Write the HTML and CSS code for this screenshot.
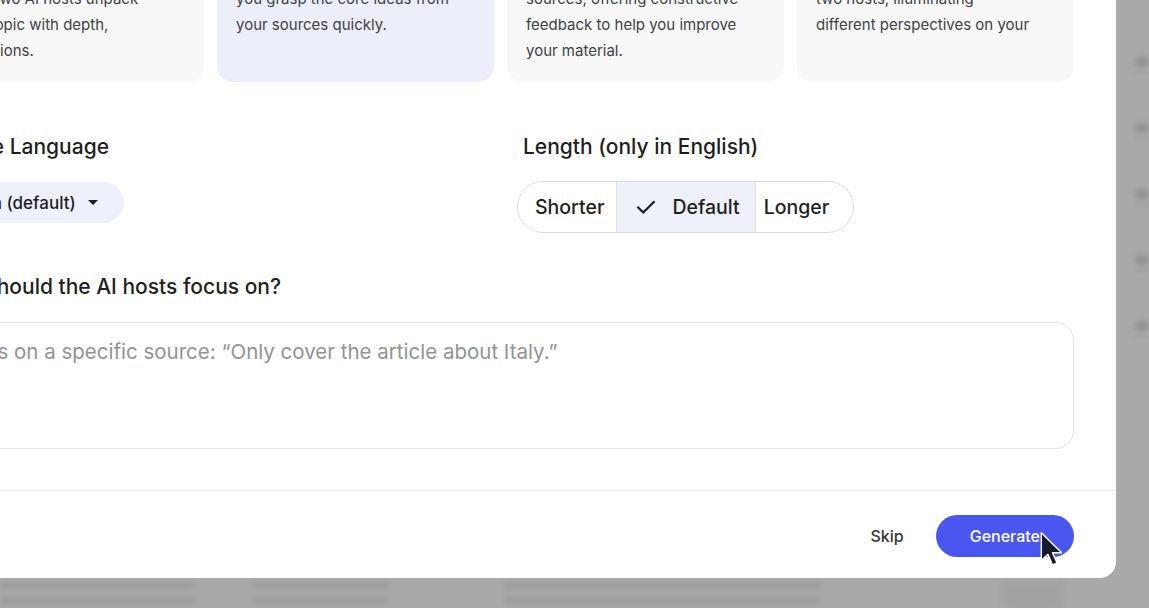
FILE: index.html
```html
<!DOCTYPE html>
<html lang="en">
<head>
<meta charset="utf-8">
<title>Customize Audio Overview</title>
<link rel="stylesheet" href="styles.css">
</head>
<body>
<div class="screen">
  <div class="stage">
    <div class="dialog">
      <div class="dialog-body">
        <div class="formats">
          <div class="card">
            <h3 class="card-title">Deep Dive</h3>
            <p class="card-text">A lively conversation between<br>where two AI hosts unpack<br>every topic with depth,<br>discussions.</p>
          </div>
          <div class="card card-selected">
            <h3 class="card-title">Brief</h3>
            <p class="card-text">A bite-sized overview to help<br>you grasp the core ideas from<br>your sources quickly.</p>
          </div>
          <div class="card">
            <h3 class="card-title">Critique</h3>
            <p class="card-text">An expert review of your<br>sources, offering constructive<br>feedback to help you improve<br>your material.</p>
          </div>
          <div class="card">
            <h3 class="card-title">Debate</h3>
            <p class="card-text">A thoughtful debate between the<br>two hosts, illuminating<br>different perspectives on your</p>
          </div>
        </div>

        <div class="options">
          <div class="option">
            <div class="option-label">Choose Language</div>
            <button class="select" type="button">English (default)
              <svg class="select-arrow" width="10" height="5" viewBox="0 0 10 5"><path d="M0 0h10L5 5z" fill="#1f1f1f"/></svg>
            </button>
          </div>
          <div class="option">
            <div class="option-label option-label-inset">Length (only in English)</div>
            <div class="segmented">
              <button class="seg seg-short" type="button">Shorter</button>
              <button class="seg seg-on" type="button">
                <svg class="check" width="22" height="22" viewBox="0 0 24 24"><path d="M3.5 12.5l5.5 5.5L20.5 6.5" fill="none" stroke="#1f1f1f" stroke-width="2.4" stroke-linecap="square"/></svg>
                Default
              </button>
              <button class="seg seg-long" type="button">Longer</button>
            </div>
          </div>
        </div>

        <div class="focus-label">What should the AI hosts focus on?</div>
        <textarea class="focus-box" placeholder="Focus on a specific source: “Only cover the article about Italy.”"></textarea>
      </div>

      <div class="dialog-footer">
        <button class="btn-text" type="button">Skip</button>
        <button class="btn-primary" type="button">Generate
          <svg class="cursor" width="22" height="36" viewBox="0 0 20 32"><path d="M1.2 1.2V26.5l6-5.6 4.2 9.6 4.1-1.8-4.1-9.3h8.3z" fill="#15172a" stroke="#ffffff" stroke-width="1.3" stroke-linejoin="round"/></svg>
        </button>
      </div>
    </div>

    <div class="side">
      <div class="mark"><span class="mark-bar"></span><span class="mark-sub"></span></div>
      <div class="mark"><span class="mark-bar"></span><span class="mark-sub"></span></div>
      <div class="mark"><span class="mark-bar"></span><span class="mark-sub"></span></div>
      <div class="mark"><span class="mark-bar"></span><span class="mark-sub"></span></div>
      <div class="mark"><span class="mark-bar"></span><span class="mark-sub"></span></div>
    </div>
  </div>

  <div class="below">
    <div class="ghost ghost-a"><span></span><span></span></div>
    <div class="ghost ghost-b"><span></span><span></span></div>
    <div class="ghost ghost-c"><span></span><span></span></div>
    <div class="ghost-line"></div>
  </div>
</div>
</body>
</html>
```

FILE: styles.css
```css
* { box-sizing: border-box; }

html, body {
  margin: 0;
  padding: 0;
}

body {
  background: #a9a9a9;
  font-family: Inter, "Liberation Sans", sans-serif;
  color: #1f1f1f;
  overflow: hidden;
}

.screen {
  width: 1149px;
  height: 608px;
  overflow: hidden;
  display: flex;
  flex-direction: column;
}

.stage {
  display: flex;
  align-items: flex-start;
  height: 578px;
  flex: none;
}

.dialog {
  flex: none;
  width: 1231px;
  margin-left: -115px;
  margin-top: -110px;
  background: #ffffff;
  border-radius: 16px;
}

.dialog-body {
  padding: 24px 42px 41px;
}

.formats {
  display: grid;
  grid-template-columns: repeat(4, 1fr);
  gap: 13px;
}

.card {
  background: #f8f8f9;
  border-radius: 16px;
  padding: 16px 19px 18px;
}

.card-selected {
  background: #eceefa;
}

.card-title {
  margin: 0 0 6px;
  font-size: 16px;
  line-height: 24px;
  font-weight: 600;
}

.card-text {
  margin: 0;
  font-size: 15px;
  line-height: 26px;
  color: #404245;
  white-space: nowrap;
}

.options {
  display: grid;
  grid-template-columns: 1fr 1fr;
  column-gap: 33px;
  margin-top: 51px;
}

.option {
  display: flex;
  flex-direction: column;
  align-items: flex-start;
  gap: 20px;
}

.option-label {
  font-size: 21px;
  line-height: 28px;
  font-weight: 500;
  color: #1f1f1f;
}

.option-label-inset {
  padding-left: 6px;
}

.select {
  margin-top: 1px;
  height: 41px;
  border: 0;
  border-radius: 21px;
  background: #eef0fb;
  padding: 0 26px 0 16px;
  display: inline-flex;
  align-items: center;
  gap: 12px;
  font-family: inherit;
  font-size: 17px;
  font-weight: 500;
  color: #1f1f1f;
}

.segmented {
  display: flex;
  height: 52px;
  border: 1px solid #dcdde0;
  border-radius: 26px;
  overflow: hidden;
}

.seg {
  border: 0;
  border-left: 1px solid #e2e3e6;
  background: transparent;
  padding: 0 15px 0 18px;
  display: flex;
  align-items: center;
  gap: 15px;
  font-family: inherit;
  font-size: 19.5px;
  font-weight: 500;
  color: #1f1f1f;
}

.seg-short {
  border-left: 0;
  padding: 0 12px 0 17px;
}

.seg-long {
  padding: 0 24px 0 8px;
}

.seg-on {
  background: #eef0fa;
}

.focus-label {
  margin-top: 40px;
  font-size: 21px;
  line-height: 28px;
  font-weight: 500;
}

.focus-box {
  display: block;
  margin-top: 21px;
  width: 100%;
  height: 127px;
  border: 1px solid #e3e3e3;
  border-radius: 18px;
  padding: 16px 22px;
  font-family: inherit;
  font-size: 20.5px;
  line-height: 26px;
  color: #1f1f1f;
  resize: none;
  outline: none;
  background: #fff;
}

.focus-box::placeholder {
  color: #939393;
}

.dialog-footer {
  border-top: 1px solid #e8e8e8;
  display: flex;
  justify-content: flex-end;
  align-items: center;
  gap: 32px;
  padding: 24px 42px 21px;
}

.btn-text {
  border: 0;
  background: none;
  padding: 0;
  font-family: inherit;
  font-size: 16px;
  font-weight: 500;
  color: #333538;
}

.btn-primary {
  position: relative;
  height: 42px;
  padding: 0 34px;
  border: 0;
  border-radius: 21px;
  background: #4a56f0;
  color: #ffffff;
  font-family: inherit;
  font-size: 16px;
  font-weight: 500;
}

.cursor {
  position: absolute;
  left: 104px;
  top: 16px;
}

.side {
  flex: 1;
  align-self: stretch;
  padding-top: 57px;
  display: flex;
  flex-direction: column;
  gap: 49px;
}

.mark {
  display: flex;
  flex-direction: column;
  gap: 4px;
  padding-left: 19px;
}

.mark-bar {
  display: block;
  height: 10px;
  background: #939393;
  border-radius: 4px;
  filter: blur(2.5px);
}

.mark-sub {
  display: block;
  height: 3px;
  background: #a2a2a2;
  filter: blur(1px);
}

.below {
  flex: none;
  height: 30px;
  display: flex;
  align-items: flex-start;
  padding-top: 4px;
}

.ghost {
  display: flex;
  flex-direction: column;
  gap: 8px;
}

.ghost span {
  display: block;
  height: 7px;
  background: #9c9c9c;
  filter: blur(2px);
}

.ghost-a { width: 194px; }
.ghost-b { width: 135px; margin-left: 59px; }
.ghost-c { width: 315px; margin-left: 117px; }

.ghost-line {
  width: 59px;
  height: 26px;
  margin-left: 183px;
  background: #a2a2a2;
  filter: blur(3px);
}
```
